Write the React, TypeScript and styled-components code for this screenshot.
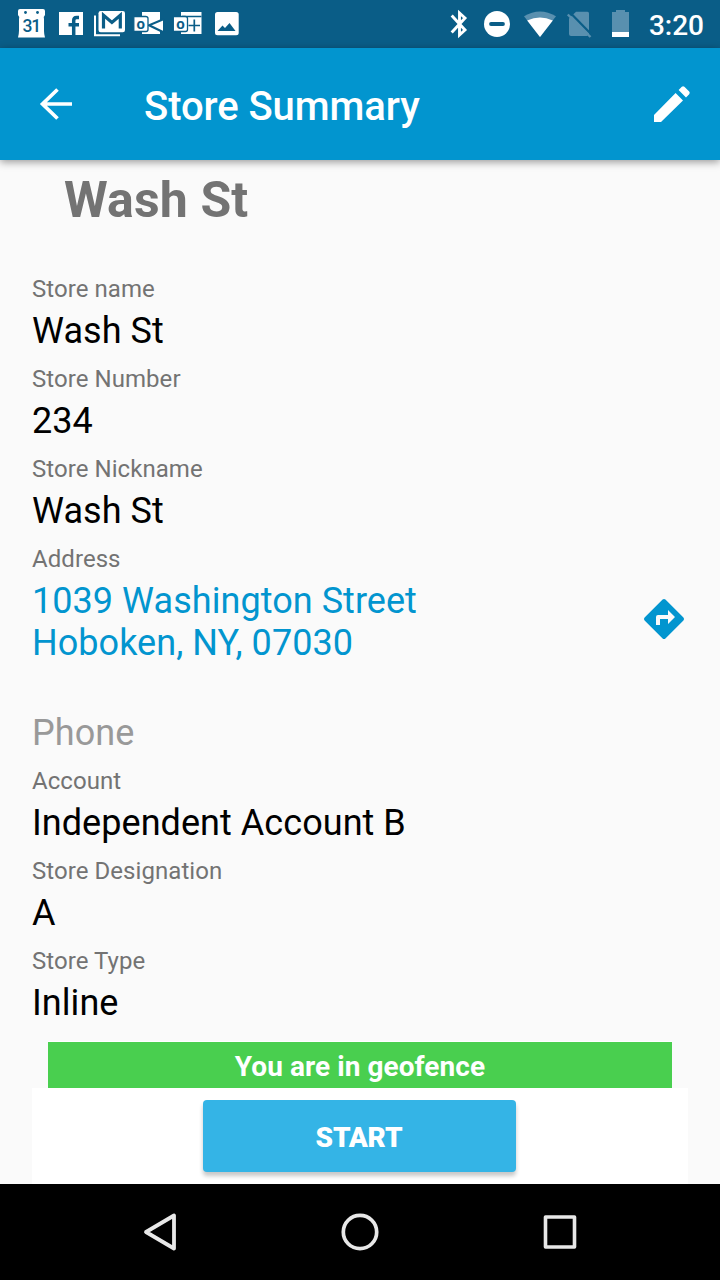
import React from "react";
import styled, { createGlobalStyle } from "styled-components";

const Global = createGlobalStyle`
  * { box-sizing: border-box; }
  body { margin: 0; background: #fafafa; font-family: Roboto, "Liberation Sans", sans-serif; }
`;

const Screen = styled.div`
  width: 720px;
  height: 1280px;
  display: flex;
  flex-direction: column;
  background: #fafafa;
  overflow: hidden;
`;

const StatusBar = styled.div`
  height: 48px;
  flex: none;
  display: flex;
  justify-content: space-between;
  background: #0a5d87;
  color: #fff;
`;

const Notifications = styled.div`
  display: flex;
  gap: 7px;
  padding-left: 16px;
`;

const Indicators = styled.div`
  display: flex;
  padding-right: 16px;
`;

const Clock = styled.div`
  width: 63px;
  text-align: right;
  font-size: 28px;
  font-weight: 500;
  line-height: 51px;
`;

const Glyph = styled.svg`
  display: block;
  flex: none;
`;

const Toolbar = styled.header`
  height: 112px;
  flex: none;
  display: flex;
  align-items: center;
  padding: 0 24px 0 32px;
  background: #0295cf;
  color: #fff;
  box-shadow: 0 2px 8px rgba(0, 0, 0, 0.4);
  z-index: 1;
`;

const ToolbarTitle = styled.h1`
  flex: 1;
  margin: 0;
  padding: 6px 0 0 64px;
  font-size: 40px;
  font-weight: 500;
  line-height: 48px;
  letter-spacing: -0.08px;
`;

const IconButton = styled.button`
  width: 48px;
  height: 48px;
  padding: 0;
  border: 0;
  background: none;
  color: inherit;
`;

const Content = styled.main`
  flex: 1;
  display: flex;
  flex-direction: column;
`;

const Heading = styled.h2`
  margin: 0;
  padding: 10px 64px 0;
  height: 108px;
  font-size: 50px;
  line-height: 60px;
  font-weight: 700;
  letter-spacing: 0.12px;
  color: #737373;
`;

const Field = styled.section<{ $space?: number }>`
  padding: 0 32px ${(p) => p.$space ?? 6}px;
  line-height: 42px;
`;

const Label = styled.div`
  font-size: 24px;
  letter-spacing: 0.06px;
  color: #737373;
`;

const Value = styled.div<{ $tone?: string }>`
  font-size: 36px;
  letter-spacing: 0.05px;
  color: ${(p) => p.$tone ?? "#000"};
`;

const AddressRow = styled.div`
  display: flex;
  justify-content: space-between;
`;

const DirectionsButton = styled(IconButton)`
  margin: 15px 0 0;
  color: #0295cf;
`;

const Banner = styled.div`
  margin: 11px 48px 0;
  height: 47px;
  border-top: 1px solid #fff;
  background: #49cf4f;
  color: #fff;
  text-align: center;
  font-size: 28px;
  font-weight: 700;
  line-height: 50px;
  letter-spacing: 0.06px;
`;

const ActionPanel = styled.div`
  margin: 0 32px;
  height: 96px;
  padding: 12px 0 0 171px;
  background: #fff;
`;

const StartButton = styled.button`
  display: block;
  width: 313px;
  height: 72px;
  padding: 2px 1px 0 0;
  border: 0;
  border-radius: 4px;
  background: #34b4e6;
  color: #fff;
  font: 900 28px Roboto, sans-serif;
  letter-spacing: -0.2px;
  box-shadow: 0 4px 4px rgba(0, 0, 0, 0.22);
`;

const NavBar = styled.nav`
  height: 96px;
  flex: none;
  display: flex;
  justify-content: center;
  align-items: center;
  gap: 152px;
  background: #000;
  color: #e8e8e8;
`;

const details = [
  { label: "Store name", value: "Wash St" },
  { label: "Store Number", value: "234" },
  { label: "Store Nickname", value: "Wash St" },
];

const accountDetails = [
  { label: "Account", value: "Independent Account B" },
  { label: "Store Designation", value: "A" },
  { label: "Store Type", value: "Inline" },
];

const BAR = "#0a5d87";

function NotificationIcons() {
  return (
    <Notifications>
      <Glyph width="32" height="48" viewBox="0 0 32 48">
        <path fill="#fff" d="M4 9h23q2 0 2 2v4q-2 2-1 4v12q0 3 1 6.500H2q1-4 1-7V19q1-2-1-4v-4q0-2 2-2z" />
        <circle cx="9.500" cy="12.500" r="1.400" fill={BAR} />
        <circle cx="21.500" cy="12.500" r="1.400" fill={BAR} />
        <text x="15.300" y="32" textAnchor="middle" fontSize="17.500" fontWeight="500" letterSpacing="-1.2" fontFamily="Roboto" fill={BAR}>31</text>
      </Glyph>
      <Glyph width="32" height="48" viewBox="0 0 32 48">
        <path fill="#fff" d="M4 12h24v23H4z" />
        <path d="M18.700 35V20.500Q18.700 17.500 21.700 17.500H24M13.500 24.700H24" fill="none" stroke={BAR} strokeWidth="3.500" />
      </Glyph>
      <Glyph width="32" height="48" viewBox="0 0 32 48">
        <path d="M1 15.500V35.300H26" fill="none" stroke="#fff" strokeWidth="2" />
        <rect x="4.500" y="11" width="26.500" height="21.300" rx="2.200" fill="#fff" />
        <path d="M9.500 28.500V15.200L17.900 22.500L26.300 15.200V28.500" fill="none" stroke={BAR} strokeWidth="3.200" />
      </Glyph>
      <Glyph width="32" height="48" viewBox="0 0 32 48">
        <path fill="#fff" d="M9 12h18v8h3v11l-3 0v3H9z" />
        <path d="M31 19L16 25.300L31 32.500" fill="none" stroke={BAR} strokeWidth="2.100" />
        <path d="M.8 16.500H12.500Q15 16.500 15 18.500V29.500Q15 31.500 13 31.500H.8z" fill="#fff" stroke={BAR} strokeWidth="1.300" />
        <text x="7.700" y="28.500" textAnchor="middle" fontSize="15" fontWeight="700" fontFamily="Roboto" fill={BAR}>o</text>
      </Glyph>
      <Glyph width="32" height="48" viewBox="0 0 32 48">
        <path fill="#fff" d="M9 12h20.500v22H9z" />
        <path d="M10 16.500H29.500M22.300 19.500V31.500M16.500 25.500H28" stroke={BAR} strokeWidth="1.700" />
        <path d="M1.300 16.500H13Q15.500 16.500 15.500 18.500V29.500Q15.500 31.500 13.500 31.500H1.300z" fill="#fff" stroke={BAR} strokeWidth="1.300" />
        <text x="8.500" y="28.500" textAnchor="middle" fontSize="15" fontWeight="700" fontFamily="Roboto" fill={BAR}>o</text>
      </Glyph>
      <Glyph width="32" height="48" viewBox="0 0 32 48">
        <rect x="4" y="12" width="23.700" height="23.300" rx="2.500" fill="#fff" />
        <path d="M6.500 31L11.500 25.500L14 28L18.500 23L24.500 31z" fill={BAR} />
      </Glyph>
    </Notifications>
  );
}

function StatusIndicators() {
  return (
    <Indicators>
      <Glyph width="38" height="48" viewBox="0 0 38 48">
        <path d="M11.700 15.500L25 30L19.500 35V13L25 18L11.700 32.500" fill="none" stroke="#fff" strokeWidth="2.900" />
      </Glyph>
      <Glyph width="38" height="48" viewBox="0 0 38 48">
        <circle cx="19" cy="24" r="13" fill="#fff" />
        <path d="M13 24H25" stroke={BAR} strokeWidth="3.800" strokeLinecap="round" />
      </Glyph>
      <Glyph width="46" height="48" viewBox="0 0 46 48">
        <path d="M8 16.300Q24 6.500 40 16.300L24 37z" fill="#5990af" />
        <path d="M11.200 20.500Q24 14.500 36.800 20.500L24 37z" fill="#fff" />
      </Glyph>
      <Glyph width="36" height="48" viewBox="0 0 36 48">
        <path d="M14 11.700H25.500Q27 11.700 27 13.200V34L25 36H9Q7 36 7 34V18.500z" fill="#5990af" />
        <path d="M8.500 13L29 34" stroke={BAR} strokeWidth="2.200" />
        <path d="M5.800 14.500L28.500 37" stroke="#5990af" strokeWidth="2.400" />
      </Glyph>
      <Glyph width="43" height="48" viewBox="0 0 43 48">
        <path d="M18 10H27V12H31V32H14V12H18z" fill="#5990af" />
        <path d="M14 32H31V37H14z" fill="#fff" />
      </Glyph>
      <Clock>3:20</Clock>
    </Indicators>
  );
}

export default function App() {
  return (
    <>
      <Global />
      <Screen>
        <StatusBar>
          <NotificationIcons />
          <StatusIndicators />
        </StatusBar>
        <Toolbar>
          <IconButton aria-label="Back">
            <Glyph width="48" height="48" viewBox="0 0 48 48">
              <path d="M40 24H10M25.500 9.500L10.500 24L25.500 38.500" fill="none" stroke="currentColor" strokeWidth="3.700" />
            </Glyph>
          </IconButton>
          <ToolbarTitle>Store Summary</ToolbarTitle>
          <IconButton aria-label="Edit">
            <Glyph width="48" height="48" viewBox="0 0 24 24">
              <path fill="currentColor" d="M3 17.500V21h3.500L17.500 10.200l-3.700-3.700zM20.600 7.100a1 1 0 0 0 0-1.300l-2.400-2.400a1 1 0 0 0-1.300 0l-1.600 1.600 3.700 3.700z" />
            </Glyph>
          </IconButton>
        </Toolbar>
        <Content>
          <Heading>Wash St</Heading>
          {details.map((d) => (
            <Field key={d.label}>
              <Label>{d.label}</Label>
              <Value>{d.value}</Value>
            </Field>
          ))}
          <Field $space={48}>
            <Label>Address</Label>
            <AddressRow>
              <Value $tone="#0295cf">
                1039 Washington Street
                <br />
                Hoboken, NY, 07030
              </Value>
              <DirectionsButton aria-label="Directions">
                <Glyph width="48" height="48" viewBox="0 0 24 24">
                  <path fill="currentColor" d="M21.710 11.290l-9-9a1 1 0 0 0-1.410 0l-9 9a1 1 0 0 0 0 1.410l9 9a1 1 0 0 0 1.410 0l9-9a1 1 0 0 0 0-1.410zM14 14.500V12h-4v3H8v-4a1 1 0 0 1 1-1h5V7.500l3.500 3.500z" />
                </Glyph>
              </DirectionsButton>
            </AddressRow>
          </Field>
          <Field>
            <Value $tone="#999">Phone</Value>
          </Field>
          {accountDetails.map((d) => (
            <Field key={d.label}>
              <Label>{d.label}</Label>
              <Value>{d.value}</Value>
            </Field>
          ))}
          <Banner>You are in geofence</Banner>
          <ActionPanel>
            <StartButton>START</StartButton>
          </ActionPanel>
        </Content>
        <NavBar>
          <Glyph width="48" height="48" viewBox="0 0 48 48">
            <path d="M38 7.500V40.500L10 24z" fill="none" stroke="currentColor" strokeWidth="3.800" strokeLinejoin="round" />
          </Glyph>
          <Glyph width="48" height="48" viewBox="0 0 48 48">
            <circle cx="24" cy="24" r="16.700" fill="none" stroke="currentColor" strokeWidth="3.700" />
          </Glyph>
          <Glyph width="48" height="48" viewBox="0 0 48 48">
            <rect x="9.500" y="9" width="29" height="30" fill="none" stroke="currentColor" strokeWidth="3.600" strokeLinejoin="round" />
          </Glyph>
        </NavBar>
      </Screen>
    </>
  );
}
